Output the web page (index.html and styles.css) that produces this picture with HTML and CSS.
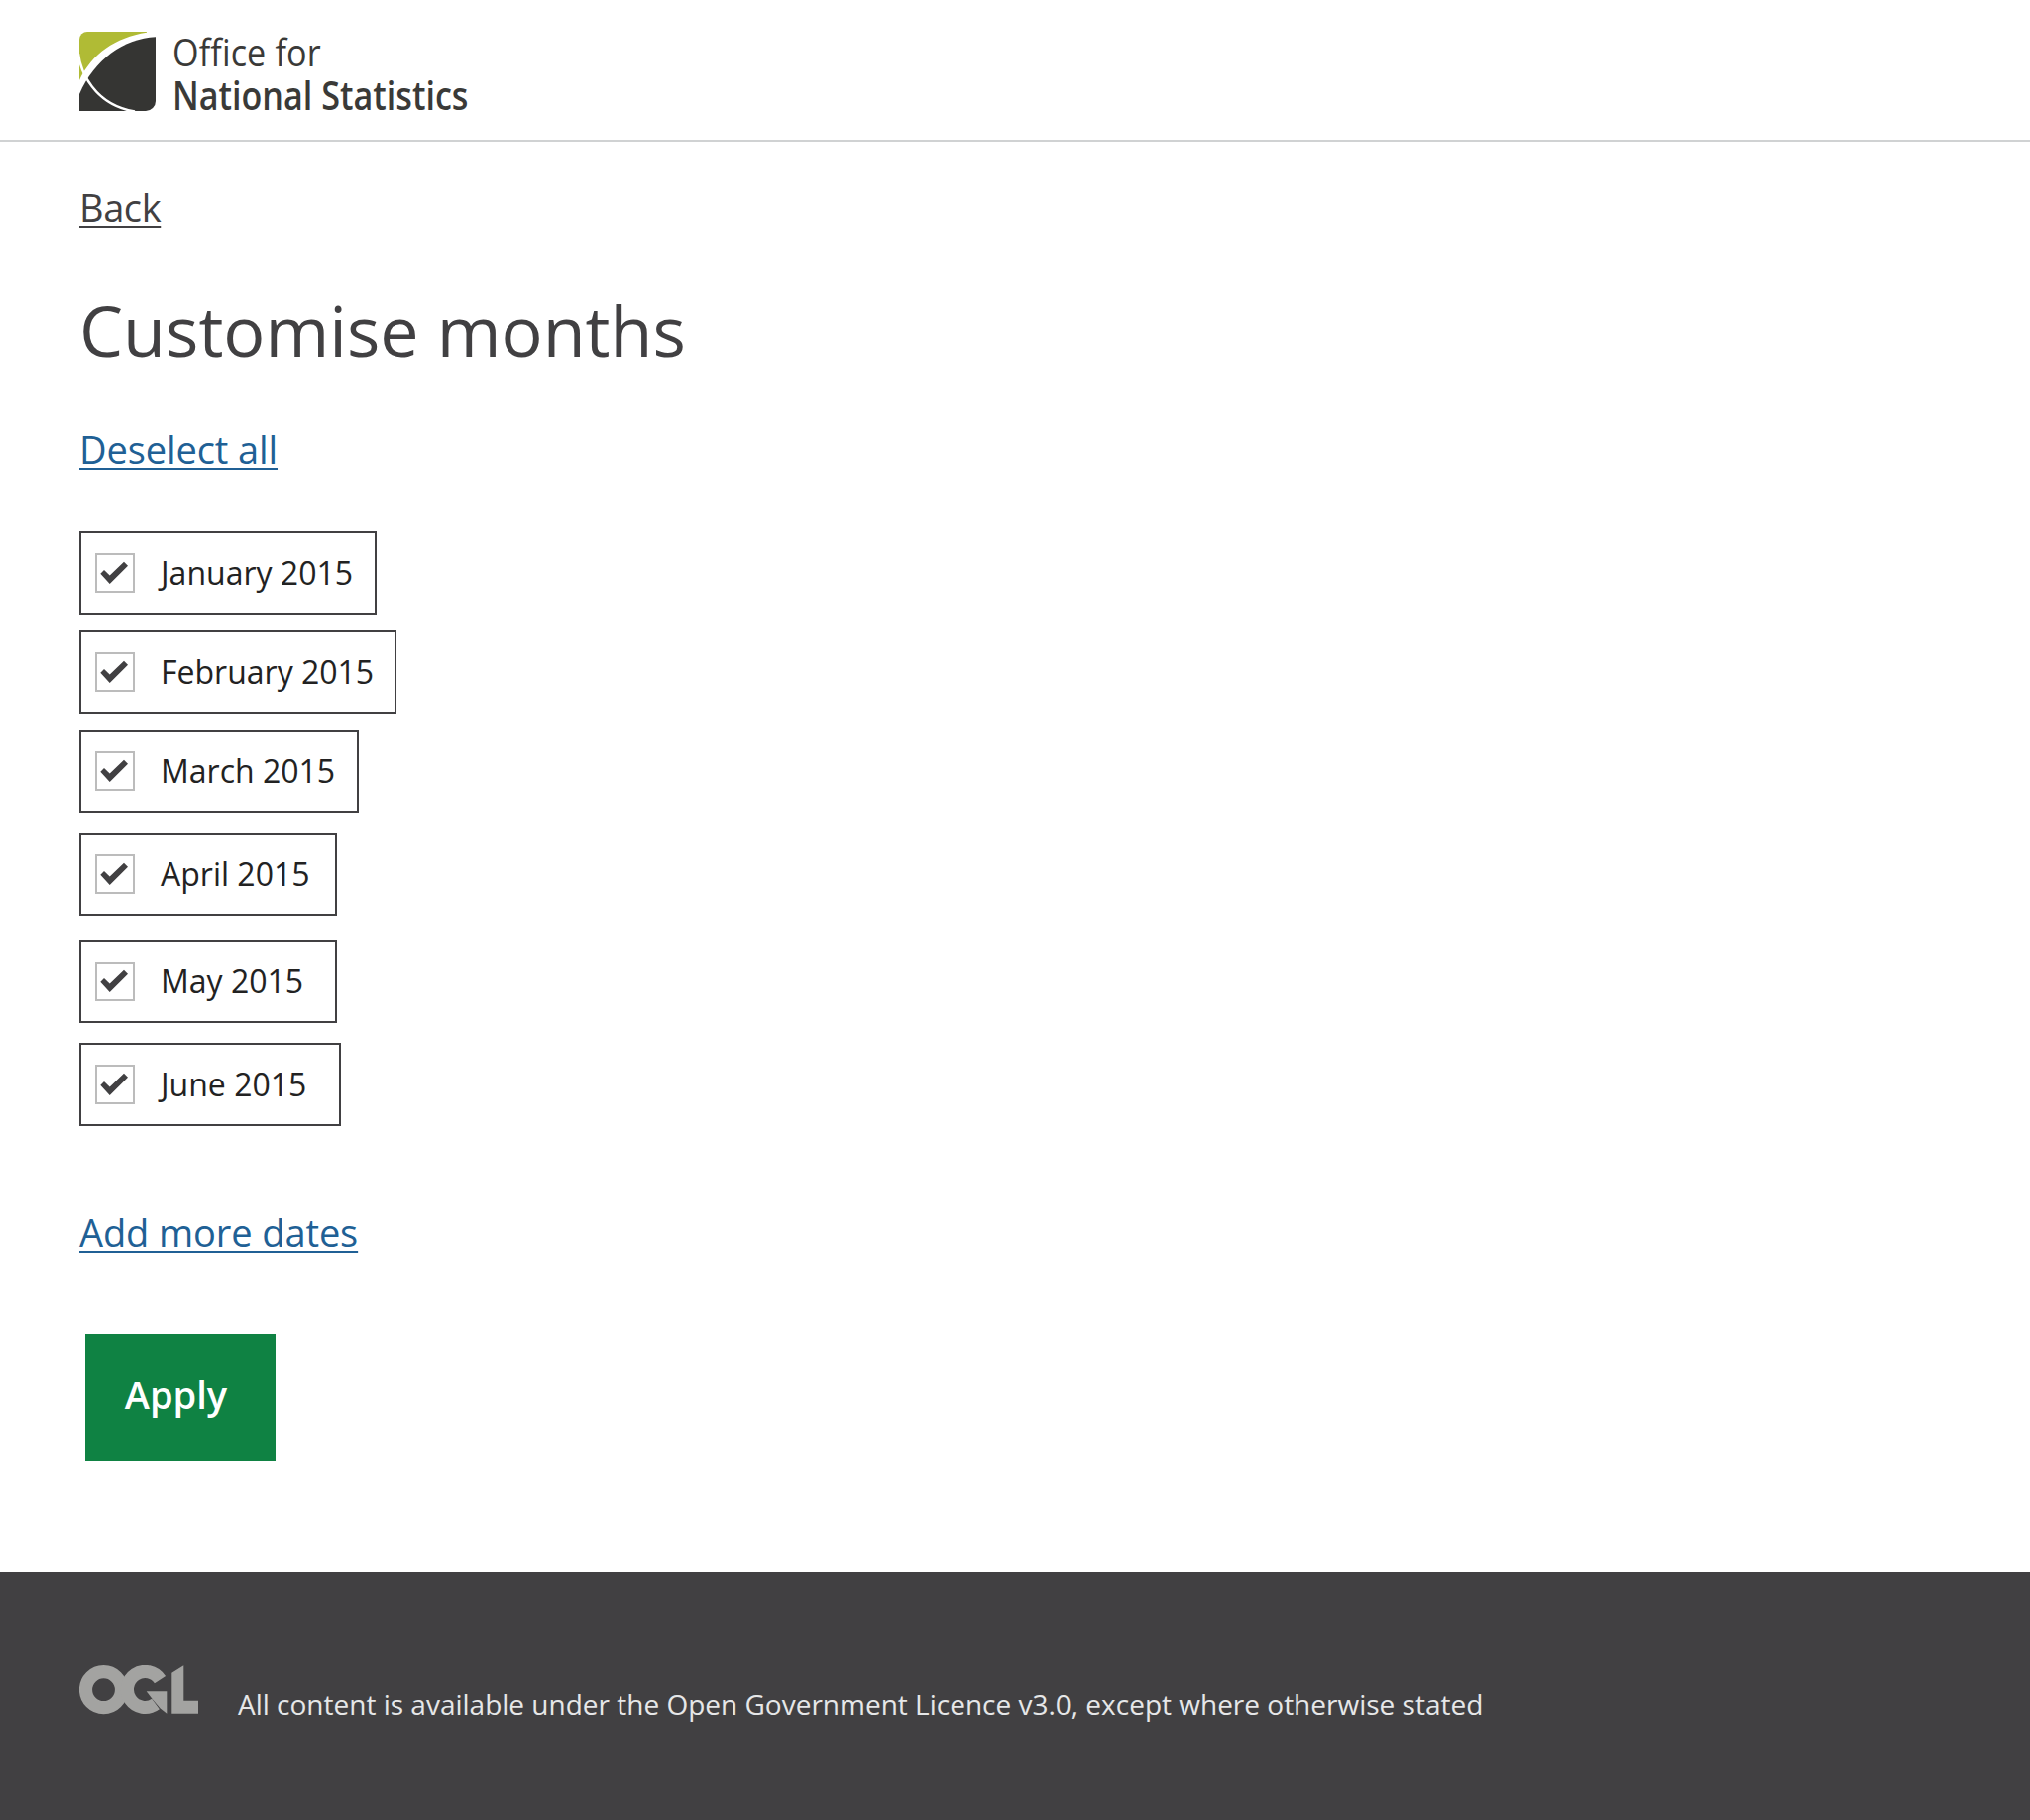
FILE: index.html
```html
<!DOCTYPE html>
<html lang="en">
<head>
<meta charset="utf-8">
<title>Customise months</title>
<link rel="stylesheet" href="styles.css">
</head>
<body>
<svg class="defs" width="0" height="0" aria-hidden="true">
  <symbol id="tick" viewBox="0 0 40 40"><path d="M5.3 20.7 9 17l5.7 5.6L29 8.8l4 3.9-18.3 18.2z"/></symbol>
</svg>
<header class="header">
  <svg class="mark" viewBox="0 0 77 80" aria-hidden="true">
    <clipPath id="mark"><path d="M8 0H77V70a10 10 0 0 1-10 10H0V8a8 8 0 0 1 8-8z"/></clipPath>
    <g clip-path="url(#mark)">
      <path class="logo-green" d="M0 0H68V.8C36 6 13 22 0 49z"/>
      <path class="logo-dark" d="M77 5.3C45 7 15 28 0 63V80H77z"/>
      <path class="logo-line" d="M-1 22C1 40 15 74 56 80.5"/>
    </g>
  </svg>
  <div class="wordmark">
    <span class="word-light">Office for</span>
    <span class="word-bold">National Statistics</span>
  </div>
</header>
<main class="main">
  <a class="link back">Back</a>
  <h1 class="title">Customise months</h1>
  <a class="link deselect">Deselect all</a>
  <div class="options">
    <label class="option january"><span class="box"><svg><use href="#tick"/></svg></span>January 2015</label>
    <label class="option february"><span class="box"><svg><use href="#tick"/></svg></span>February 2015</label>
    <label class="option march"><span class="box"><svg><use href="#tick"/></svg></span>March 2015</label>
    <label class="option april"><span class="box"><svg><use href="#tick"/></svg></span>April 2015</label>
    <label class="option may"><span class="box"><svg><use href="#tick"/></svg></span>May 2015</label>
    <label class="option june"><span class="box"><svg><use href="#tick"/></svg></span>June 2015</label>
  </div>
  <a class="link add">Add more dates</a>
  <button class="apply">Apply</button>
</main>
<footer class="footer">
  <svg class="ogl" viewBox="0 0 120 50" role="img" aria-label="OGL">
    <circle cx="24.5" cy="24.7" r="18"/>
    <path class="ring" d="M81.5 14.7A18 18 0 1 0 77 39"/>
    <path class="solid" d="M67.7 26.3H88.3V48.7L81.7 43.5 74 34.5z"/>
    <path class="solid" d="M93.3 7.7 105.3.3V35.7H120V48.7H93.3z"/>
  </svg>
  <p class="licence">All content is available under the Open Government Licence v3.0, except where otherwise stated</p>
</footer>
</body>
</html>
```
FILE: styles.css
```css
* { box-sizing: border-box; }
body {
  margin: 0;
  min-height: 1836px;
  display: flex;
  flex-direction: column;
  background: #fff;
  color: #414042;
  font-family: "Open Sans", "Noto Sans", sans-serif;
}
.defs { position: absolute; }
.header {
  height: 143px;
  padding: 32px 80px 0;
  display: flex;
  gap: 17px;
  border-bottom: 2px solid #d0d2d3;
}
.mark { flex: none; width: 77px; height: 80px; }
.logo-green { fill: #b0bb35; }
.logo-dark { fill: #353533; }
.logo-line { fill: none; stroke: #fff; stroke-width: 2.4; }
.wordmark {
  display: flex;
  flex-direction: column;
  font-size: 39px;
  line-height: 43px;
  color: #3a3a38;
  white-space: nowrap;
  transform: scaleX(0.875);
  transform-origin: left top;
}
.word-light { font-weight: 400; letter-spacing: 0.15px; margin: -2px 0 1px; }
.word-bold { font-weight: 600; }

.main {
  flex: none;
  height: 1443px;
  padding: 41px 80px 0;
  display: flex;
  flex-direction: column;
  align-items: flex-start;
}
.link {
  font-size: 38px;
  letter-spacing: -0.1px;
  line-height: 50px;
  height: 50px;
  text-decoration: underline;
  text-decoration-thickness: 2px;
  text-underline-offset: 4px;
  text-decoration-skip-ink: none;
  color: #206095;
  white-space: nowrap;
}
.back { color: #414042; letter-spacing: -0.4px; }
.title {
  margin: 50px 0 0;
  font-size: 70px;
  line-height: 98px;
  font-weight: 400;
  white-space: nowrap;
}
.deselect { margin-top: 46px; }
.options {
  margin-top: 58px;
  display: flex;
  flex-direction: column;
  gap: 16px;
}
.option {
  display: flex;
  align-items: center;
  gap: 26px;
  height: 84px;
  padding: 0 0 0 14px;
  border: 2px solid #414042;
  color: #222;
  font-size: 32px;
  line-height: 44px;
  white-space: nowrap;
}
.january { width: 300px; }
.february { width: 320px; }
.march { width: 282px; }
.april { width: 260px; margin-top: 4px; }
.may { width: 260px; margin-top: 8px; }
.june { width: 264px; margin-top: 4px; }
.box {
  flex: none;
  width: 40px;
  height: 40px;
  border: 2px solid #bcbcbc;
}
.box svg { display: block; width: 40px; height: 40px; margin: -2px; fill: #414042; }
.add { margin-top: 82px; }
.apply {
  width: 192px;
  height: 128px;
  margin: 78px 0 0 6px;
  padding: 0 9px 9px 0;
  border: 0;
  background: #0f8243;
  color: #fff;
  font: 600 38px/50px "Open Sans", sans-serif;
}
.footer {
  flex: 1;
  display: flex;
  align-items: flex-start;
  gap: 40px;
  padding: 94px 80px 0;
  background: #414042;
}
.ogl { flex: none; width: 120px; height: 50px; fill: none; stroke: #a3a3a1; stroke-width: 13.2; }
.ogl .solid { fill: #a3a3a1; stroke: none; }
.licence {
  margin: 19px 0 0;
  font-size: 28px;
  line-height: 40px;
  color: #e6e7e8;
  white-space: nowrap;
}
```
